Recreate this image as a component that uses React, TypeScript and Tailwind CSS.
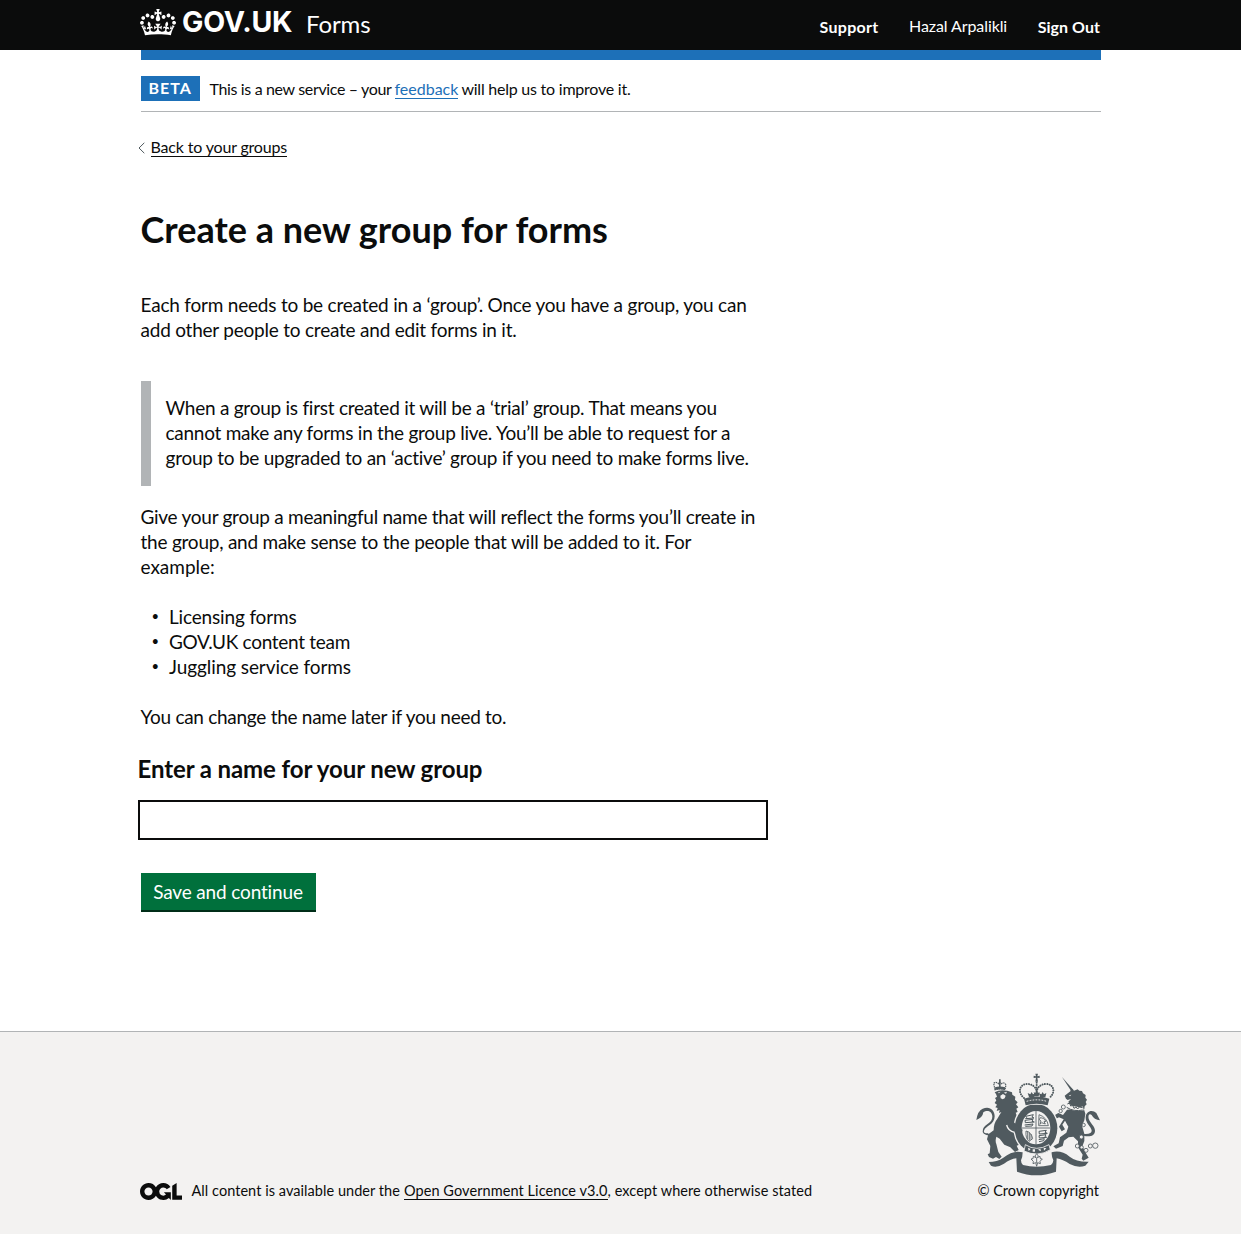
import React from 'react';

function Crown() {
  return (
    <svg viewBox="0 0 132 97" className="h-[26.5px] w-9 shrink-0" fill="currentColor" aria-hidden="true">
      <path d="M25 30.2c3.5 1.5 7.7-.2 9.1-3.7 1.5-3.6-.2-7.8-3.9-9.2-3.6-1.4-7.6.3-9.1 3.9-1.4 3.5.3 7.5 3.9 9zM9 39.5c3.6 1.5 7.8-.2 9.2-3.7 1.5-3.6-.2-7.8-3.9-9.1-3.6-1.5-7.6.2-9.1 3.8-1.4 3.5.3 7.5 3.8 9zM4.4 57.2c3.5 1.5 7.7-.2 9.1-3.8 1.5-3.6-.2-7.7-3.9-9.1-3.5-1.5-7.6.3-9.1 3.8-1.4 3.5.3 7.6 3.9 9.1zm38.3-21.4c3.5 1.5 7.7-.2 9.1-3.8 1.5-3.6-.2-7.7-3.9-9.1-3.6-1.5-7.6.3-9.1 3.8-1.3 3.6.4 7.7 3.9 9.1zm64.4-5.6c-3.6 1.5-7.8-.2-9.1-3.7-1.5-3.6.2-7.8 3.8-9.2 3.6-1.4 7.7.3 9.2 3.9 1.3 3.5-.4 7.5-3.9 9zm15.9 9.3c-3.6 1.5-7.7-.2-9.1-3.7-1.5-3.6.2-7.8 3.7-9.1 3.6-1.5 7.7.2 9.2 3.8 1.5 3.5-.3 7.5-3.8 9zm4.7 17.7c-3.6 1.5-7.8-.2-9.2-3.8-1.5-3.6.2-7.7 3.9-9.1 3.6-1.5 7.7.3 9.2 3.8 1.3 3.5-.4 7.6-3.9 9.1zM89.3 35.8c-3.6 1.5-7.8-.2-9.2-3.8-1.4-3.6.2-7.7 3.9-9.1 3.6-1.5 7.7.3 9.2 3.8 1.4 3.6-.3 7.7-3.9 9.1zM69.7 17.7l8.9 4.7V9.3l-8.9 2.8c-.2-.3-.5-.6-.9-.9L72.4 0H59.6l3.5 11.2c-.3.3-.6.5-.9.9l-8.8-2.8v13.1l8.8-4.7c.3.3.6.7.9.9l-5 15.4v.1c-.2.8-.4 1.6-.4 2.4 0 4.1 3.1 7.5 7 8.1h.2c.3 0 .7.1 1 .1.4 0 .7 0 1-.1h.2c4-.6 7.1-4.1 7.1-8.1 0-.8-.1-1.7-.4-2.4V34l-5.1-15.4c.4-.2.7-.6 1-.9zM66 92.8c16.9 0 32.8 1.1 47.1 3.2 4-16.9 8.9-26.7 14-33.5l-9.6-3.4c1 4.9 1.1 7.2 0 10.2-1.5-1.4-3-4.3-4.2-8.7L108.6 76c2.8-2 5-3.2 7.5-3.3-4.4 9.4-10 11.9-13.6 11.2-4.3-.8-6.3-4.6-5.6-7.9 1-4.7 5.7-5.9 8-.5 4.3-8.7-3-11.4-7.6-8.8 7.1-7.2 7.9-13.5 2.1-21.1-8 6.1-8.1 12.3-4.5 20.8-4.7-5.4-12.1-2.5-9.5 6.2 3.4-5.2 7.9-2 7.2 3.1-.6 4.3-6.4 7.8-13.5 7.2-10.3-.9-10.9-8-11.2-13.8 2.5-.5 7.1 1.8 11 7.3L80.2 60c-4.1 4.4-8 5.3-12.3 5.4 1.4-4.4 8-11.6 8-11.6H55.5s6.4 7.2 7.9 11.6c-4.2-.1-8-1-12.3-5.4l1.4 16.4c3.9-5.5 8.5-7.7 10.9-7.3-.3 5.8-.9 12.8-11.1 13.8-7.2.6-12.9-2.9-13.5-7.2-.7-5 3.8-8.3 7.1-3.1 2.7-8.7-4.6-11.6-9.4-6.2 3.7-8.5 3.6-14.7-4.6-20.8-5.8 7.6-5 13.9 2.2 21.1-4.7-2.6-11.9.1-7.7 8.8 2.3-5.5 7.1-4.2 8.1.5.7 3.3-1.3 7.1-5.7 7.9-3.5.7-9-1.8-13.5-11.2 2.5.1 4.7 1.3 7.5 3.3l-4.7-15.4c-1.2 4.4-2.7 7.2-4.3 8.7-1.1-3-.9-5.3 0-10.2l-9.5 3.4c5 6.9 9.9 16.7 14 33.5 14.8-2.1 30.8-3.2 47.7-3.2z" />
    </svg>
  );
}

function OglLogo() {
  return (
    <svg viewBox="0 0 483.2 195.7" className="h-[17px] w-[42px] shrink-0" fill="currentColor" aria-hidden="true">
      <path d="M421.5 142.8V.1l-50.7 32.3v161.1h112.4v-50.7zm-122.3-9.6A47.12 47.12 0 0 1 221 97.8c0-26 21.1-47.1 47.1-47.1 16.7 0 31.4 8.7 39.7 21.8l42.7-27.2A97.63 97.63 0 0 0 268.1 0c-36.5 0-68.3 20.1-85.1 49.7A98 98 0 0 0 97.8 0C43.9 0 0 43.9 0 97.8s43.9 97.8 97.8 97.8c36.5 0 68.3-20.1 85.1-49.7a97.76 97.76 0 0 0 149.6 25.4l19.4 22.2h3v-87.8h-80l24.3 27.5zM97.8 145c-26 0-47.1-21.1-47.1-47.1s21.1-47.1 47.1-47.1 47.1 21.1 47.1 47.1S123.8 145 97.8 145" />
    </svg>
  );
}

function RoyalArms() {
  return (
    <svg viewBox="30 24 375 312" className="h-[104px] w-[125px]" aria-hidden="true">
      <g fill="#505a5f" stroke="none">
        {/* lion: crown */}
        <path d="M90 74l-4-19q8-6 14 1 4-7 9 0 9-6 14 4l-3 14q-15-4-30 0z" fill="none" stroke="#505a5f" strokeWidth="3.5" strokeDasharray="4.5 2" />
        <path d="M102 43h5v28h-5z" />
        <path d="M90 67q14-5 31 0l-1 8q-15-4-29 0z" />
        {/* lion: head, mane and body */}
        <path d="M89 82q14-9 38-5l14 5 1 7 9 6-1 9 8 8-5 6 7 9-6 4 4 10-6 2 4 11q8 10 12 22l5 6-2 20-6 8 8 14-4 13-14 5 6 13-11 6-14-14-18-8-14-18-10-6q-4 14 0 22l6 24 10 14-7 7-10-6-9 5-12-5-4-8 6-3 2-22-10-20 4-15 16-12q0-22 11-35l12-20-7 3 2-9-9 3 3-9-7-2 5-8-7-5 5-8-4-7 6-4-3-8z" />
        {/* lion: tail */}
        <path d="M76 212q-28-2-22-20c6-15 29-17 28-38-1-17-17-20-27-12q-2 16-21 23 4-28 19-34c20-9 36 3 36 23 0 25-27 28-32 43q-3 8 12 8z" />
        {/* unicorn: horn, head, mane and neck */}
        <path d="M291 36l35 40-7 3z" />
        <path d="M299 92l17-13 3-10 8 8 11-4 5 4 8 1 3 7 8 5-1 8 5 6-4 7 3 7-6 6-1 8-10 6-28-6-10-22 8-8-10 3-5-4z" />
        {/* unicorn: body and legs */}
        <path d="M306 134l50-4 5 16-3 20-7 16 7 24v22l-6 16 9 18 10 16-16 9-5-6 3-12-14-22 0-18-14-14-14 2-14 10-4 16-20 8-8-7 16-9 4-18 19-14 6-18-10-18-8 12 8 14-10 6-8-14 14-22-14-6-12 6-4-11 14-8 14 6z" />
        {/* unicorn: tail */}
        <path d="M356 207q25 2 24-11c-3-13-18-22-18-38 0-20 20-26 32-14l11 22q-18-2-25-16c-8-6-11 2-9 11 4 13 19 22 19 36 0 16-17 20-34 15z" />
        {/* motto scroll */}
        <path d="M71 291q25 0 44-13 29-24 58-16q0 14-5 24 0 10 6 14 40 10 84 0 7-7 7-14 -6-14-5-24q28-8 54 13 20 16 57 15l-10 12q-22 8-47-5-21-14-39-17l-2 40q-60 22-117 0l-2-40q-18 2-37 16-22 14-39 6z" />
        {/* garter */}
        <ellipse cx="213" cy="190" rx="68" ry="77" fill="#f3f2f1" />
        <ellipse cx="213" cy="190" rx="64" ry="73" />
      </g>
      <g fill="#f3f2f1">
        <path d="M98 83l9-3-5 5zM116 83l10-3-3 6zM106 92l8-5 8 5-3 8-6 3-6-3z" />
        <path d="M312 91l7-2-4 5z" />
        <ellipse cx="213" cy="188" rx="43" ry="50" />
      </g>
      {/* lion: foreleg on the garter */}
      <path d="M129 166q18 0 24 14l20 14-3 14-24-6-20-14z" fill="#505a5f" />
      <path d="M125 180q4 18 24 22" fill="none" stroke="#f3f2f1" strokeWidth="4" />
      {/* quartered shield */}
      <g fill="none" stroke="#505a5f" strokeWidth="2.5">
        <path d="M213 138v100M170 189h86" />
        <path d="M182 154l23-5-4 7 6 3-25 2 3-4zM180 166l24-3-3 6 7 2-27 2zM179 180l25-3-3 6-20 1" strokeWidth="3" />
        <path d="M222 149q24 8 28 33h-29zM226 158l9 2 8 9-6 1 4 7-11-4-5 5 3-10-5-4z" />
        <path d="M183 198q16 3 20 23l-11 8q-11-9-9-31zM188 200v23M193 203v23M198 207v17" />
        <path d="M222 199l22-3-4 6 7 3-24 2zM222 212l21-3-3 6 5 2-22 2zM221 224l17-3-2 6-14 3" strokeWidth="3" />
      </g>
      {/* garter buckle strap */}
      <path d="M181 239q33 22 71 0l4 15q-37 24-79 4z" fill="#505a5f" stroke="#f3f2f1" strokeWidth="2.5" />
      <g fill="#f3f2f1">
        <path d="M189 248l8 4-6 6zM203 253h7v7h-7zM219 254l7-3 2 8zM236 248l8 2-7 7z" />
      </g>
      {/* central crown */}
      <path d="M176 119l-2-16c-18-17-8-44 13-44 14 0 24 8 28 15 4-7 14-15 28-15 21 0 31 27 13 44l-2 16z" fill="#f3f2f1" />
      <g fill="#505a5f">
        <path d="M211 26h8l-2 8 7-2v7l-7-1 2 12h-8l2-12-7 1v-7l7 2z" />
        <path d="M177 101q37-13 76 0l-5 20q-34-10-66 0z" />
        <path d="M192 96l-4-12 8 4 4-7 4 7 6-3-2 11zM209 94l-3-12 5 1 4-8 4 8 5-1-3 12zM225 96l-3-11 7 3 4-7 4 7 7-4-3 13z" />
      </g>
      <g fill="none" stroke="#505a5f" strokeWidth="6" strokeLinecap="round" strokeDasharray="0.1 7">
        <path d="M177 99c-23-20-10-43 10-42 16 0 27 11 28 23 1-12 12-23 28-23 20-1 33 22 10 42" />
        <path d="M215 53v24" />
      </g>
      <path d="M185 109q31-9 60 0" fill="none" stroke="#f3f2f1" strokeWidth="3" strokeDasharray="5 4" />
      {/* unicorn collar and chain */}
      <path d="M309 122q18 14 46 8" fill="none" stroke="#f3f2f1" strokeWidth="12" />
      <path d="M307 117l7-3 3 9 6-2 4 9 6-4 5 6 5-6 10 2M305 127q21 14 48 8" fill="none" stroke="#505a5f" strokeWidth="3" />
      <g fill="#f3f2f1" stroke="#505a5f" strokeWidth="2.5">
        <circle cx="295" cy="126" r="6" />
        <circle cx="287" cy="138" r="5" />
        <circle cx="356" cy="180" r="5" />
        <circle cx="349" cy="216" r="6" />
        <circle cx="337" cy="243" r="6" />
        <circle cx="350" cy="247" r="5" />
        <circle cx="363" cy="256" r="6" />
        <circle cx="376" cy="243" r="6" />
        <circle cx="391" cy="242" r="8" />
      </g>
      {/* plant badge */}
      <path d="M215 266l5 7-3 5 8-4 1 7 6 1-7 7 1 7-8-3-3 11-3-11-8 3 1-7-7-7 6-1 1-7 8 4-3-5zM215 278v17" fill="#f3f2f1" stroke="#505a5f" strokeWidth="2.5" />
    </svg>
  );
}

const examples = [
  { text: 'Licensing forms', tracking: 'tracking-[-0.16px]' },
  { text: 'GOV.UK content team', tracking: 'tracking-[-0.3px]' },
  { text: 'Juggling service forms', tracking: 'tracking-[-0.08px]' },
];

export default function App() {
  return (
    <div className="min-h-[1234px] bg-white font-['Lato',sans-serif] text-[19px] leading-[25px] text-[#0b0c0c]">
      <header className="h-[50px] bg-[#0b0c0c] text-white">
        <div className="mx-auto flex h-[50px] w-[961px] justify-between pr-px">
          <div className="flex items-start">
            <div className="pt-[9px]"><Crown /></div>
            <span className="ml-[6px] w-[124px] pt-[2px] font-['Inter',sans-serif] text-[28.5px] leading-[40px] font-bold tracking-[-0.2px]">GOV.UK</span>
            <span className="pt-[4px] text-2xl leading-[40px] tracking-[-0.1px]">Forms</span>
          </div>
          <nav className="flex items-start pt-[17px] text-base leading-5">
            <a className="mr-[30.5px] font-bold tracking-[0.3px]">Support</a>
            <span className="-mt-px mr-[30.5px] tracking-[-0.09px]">Hazal Arpalikli</span>
            <a className="font-bold tracking-[0.05px]">Sign Out</a>
          </nav>
        </div>
      </header>

      <main className="mx-auto flex h-[981px] w-[960px] flex-col items-start">
        <div className="h-[10px] w-full bg-[#1d70b8]" />
        <div className="flex h-[52px] w-full items-start border-b border-[#b1b4b6] pt-4 text-base">
          <strong className="mr-[10px] h-[25px] w-[59px] bg-[#1d70b8] pl-2 tracking-[1px] text-white">BETA</strong>
          <span className="mt-px mr-[3px] tracking-[-0.35px] whitespace-nowrap">This is a new service – your</span>
          <a className="mt-[3px] mr-[3px] h-5 border-b border-[#1d70b8] leading-[20px] text-[#1d70b8]">feedback</a>
          <span className="mt-px tracking-[-0.23px] whitespace-nowrap">will help us to improve it.</span>
        </div>

        <div className="mt-[25px] -ml-[3px] flex items-center gap-[6px] text-base">
          <svg viewBox="0 0 7 12" className="mt-0.5 h-3 w-[7px]" fill="none" stroke="#505a5f" strokeWidth="1"><path d="M6.3.8L1 6l5.3 5.2" /></svg>
          <a className="h-5 border-b border-[#0b0c0c] leading-[20px] tracking-[-0.17px]">Back to your groups</a>
        </div>

        <h1 className="mt-[52px] text-4xl leading-[40px] font-bold whitespace-nowrap">Create a new group for forms</h1>

        <p className="mt-[43px] whitespace-nowrap">
          <span className="block tracking-[-0.21px]">Each form needs to be created in a ‘group’. Once you have a group, you can</span>
          <span className="block tracking-[-0.22px]">add other people to create and edit forms in it.</span>
        </p>

        <p className="mt-[39px] border-l-[10px] border-[#b1b4b6] pt-[14px] pb-4 pl-[15px] tracking-[-0.25px] whitespace-nowrap">
          <span className="block">When a group is first created it will be a ‘trial’ group. That means you</span>
          <span className="block">cannot make any forms in the group live. You’ll be able to request for a</span>
          <span className="block">group to be upgraded to an ‘active’ group if you need to make forms live.</span>
        </p>

        <p className="mt-[18px] whitespace-nowrap">
          <span className="block tracking-[-0.26px]">Give your group a meaningful name that will reflect the forms you’ll create in</span>
          <span className="block tracking-[-0.23px]">the group, and make sense to the people that will be added to it. For</span>
          <span className="block">example:</span>
        </p>

        <ul className="mt-[25px] list-none">
          {examples.map((e) => (
            <li key={e.text} className="flex">
              <span className="w-[28.5px] pl-[11px] text-[13px]">•</span>
              <span className={e.tracking}>{e.text}</span>
            </li>
          ))}
        </ul>

        <p className="mt-[25px] tracking-[-0.28px]">You can change the name later if you need to.</p>

        <label htmlFor="group-name" className="mt-[25px] -ml-[3px] text-2xl leading-[30px] font-bold tracking-[-0.1px]">Enter a name for your new group</label>
        <input id="group-name" type="text" className="mt-4 -ml-[3px] h-10 w-[630px] border-2 border-[#0b0c0c] bg-white px-2 outline-none" />

        <button type="button" className="mt-[33px] h-[39px] w-[175px] border-b-2 border-[#002d18] bg-[#00703c] tracking-[-0.15px] text-white">Save and continue</button>
      </main>

      <footer className="h-[203px] border-t border-[#b1b4b6] bg-[#f3f2f1]">
        <div className="mx-auto flex w-[961px] items-end justify-between pt-[41px] pr-px text-[14.5px] leading-5">
          <div className="flex items-start">
            <div className="mr-[9.5px] pt-px"><OglLogo /></div>
            <span className="-mt-px mr-1 tracking-[0.05px]">All content is available under the</span>
            <a className="-mt-px h-[19px] border-b border-[#0b0c0c] tracking-[0.08px]">Open Government Licence v3.0</a>
            <span className="-mt-px tracking-[0.07px]">, except where otherwise stated</span>
          </div>
          <div className="flex flex-col items-end">
            <RoyalArms />
            <span className="mt-1 mr-[1px]">© Crown copyright</span>
          </div>
        </div>
      </footer>
    </div>
  );
}
